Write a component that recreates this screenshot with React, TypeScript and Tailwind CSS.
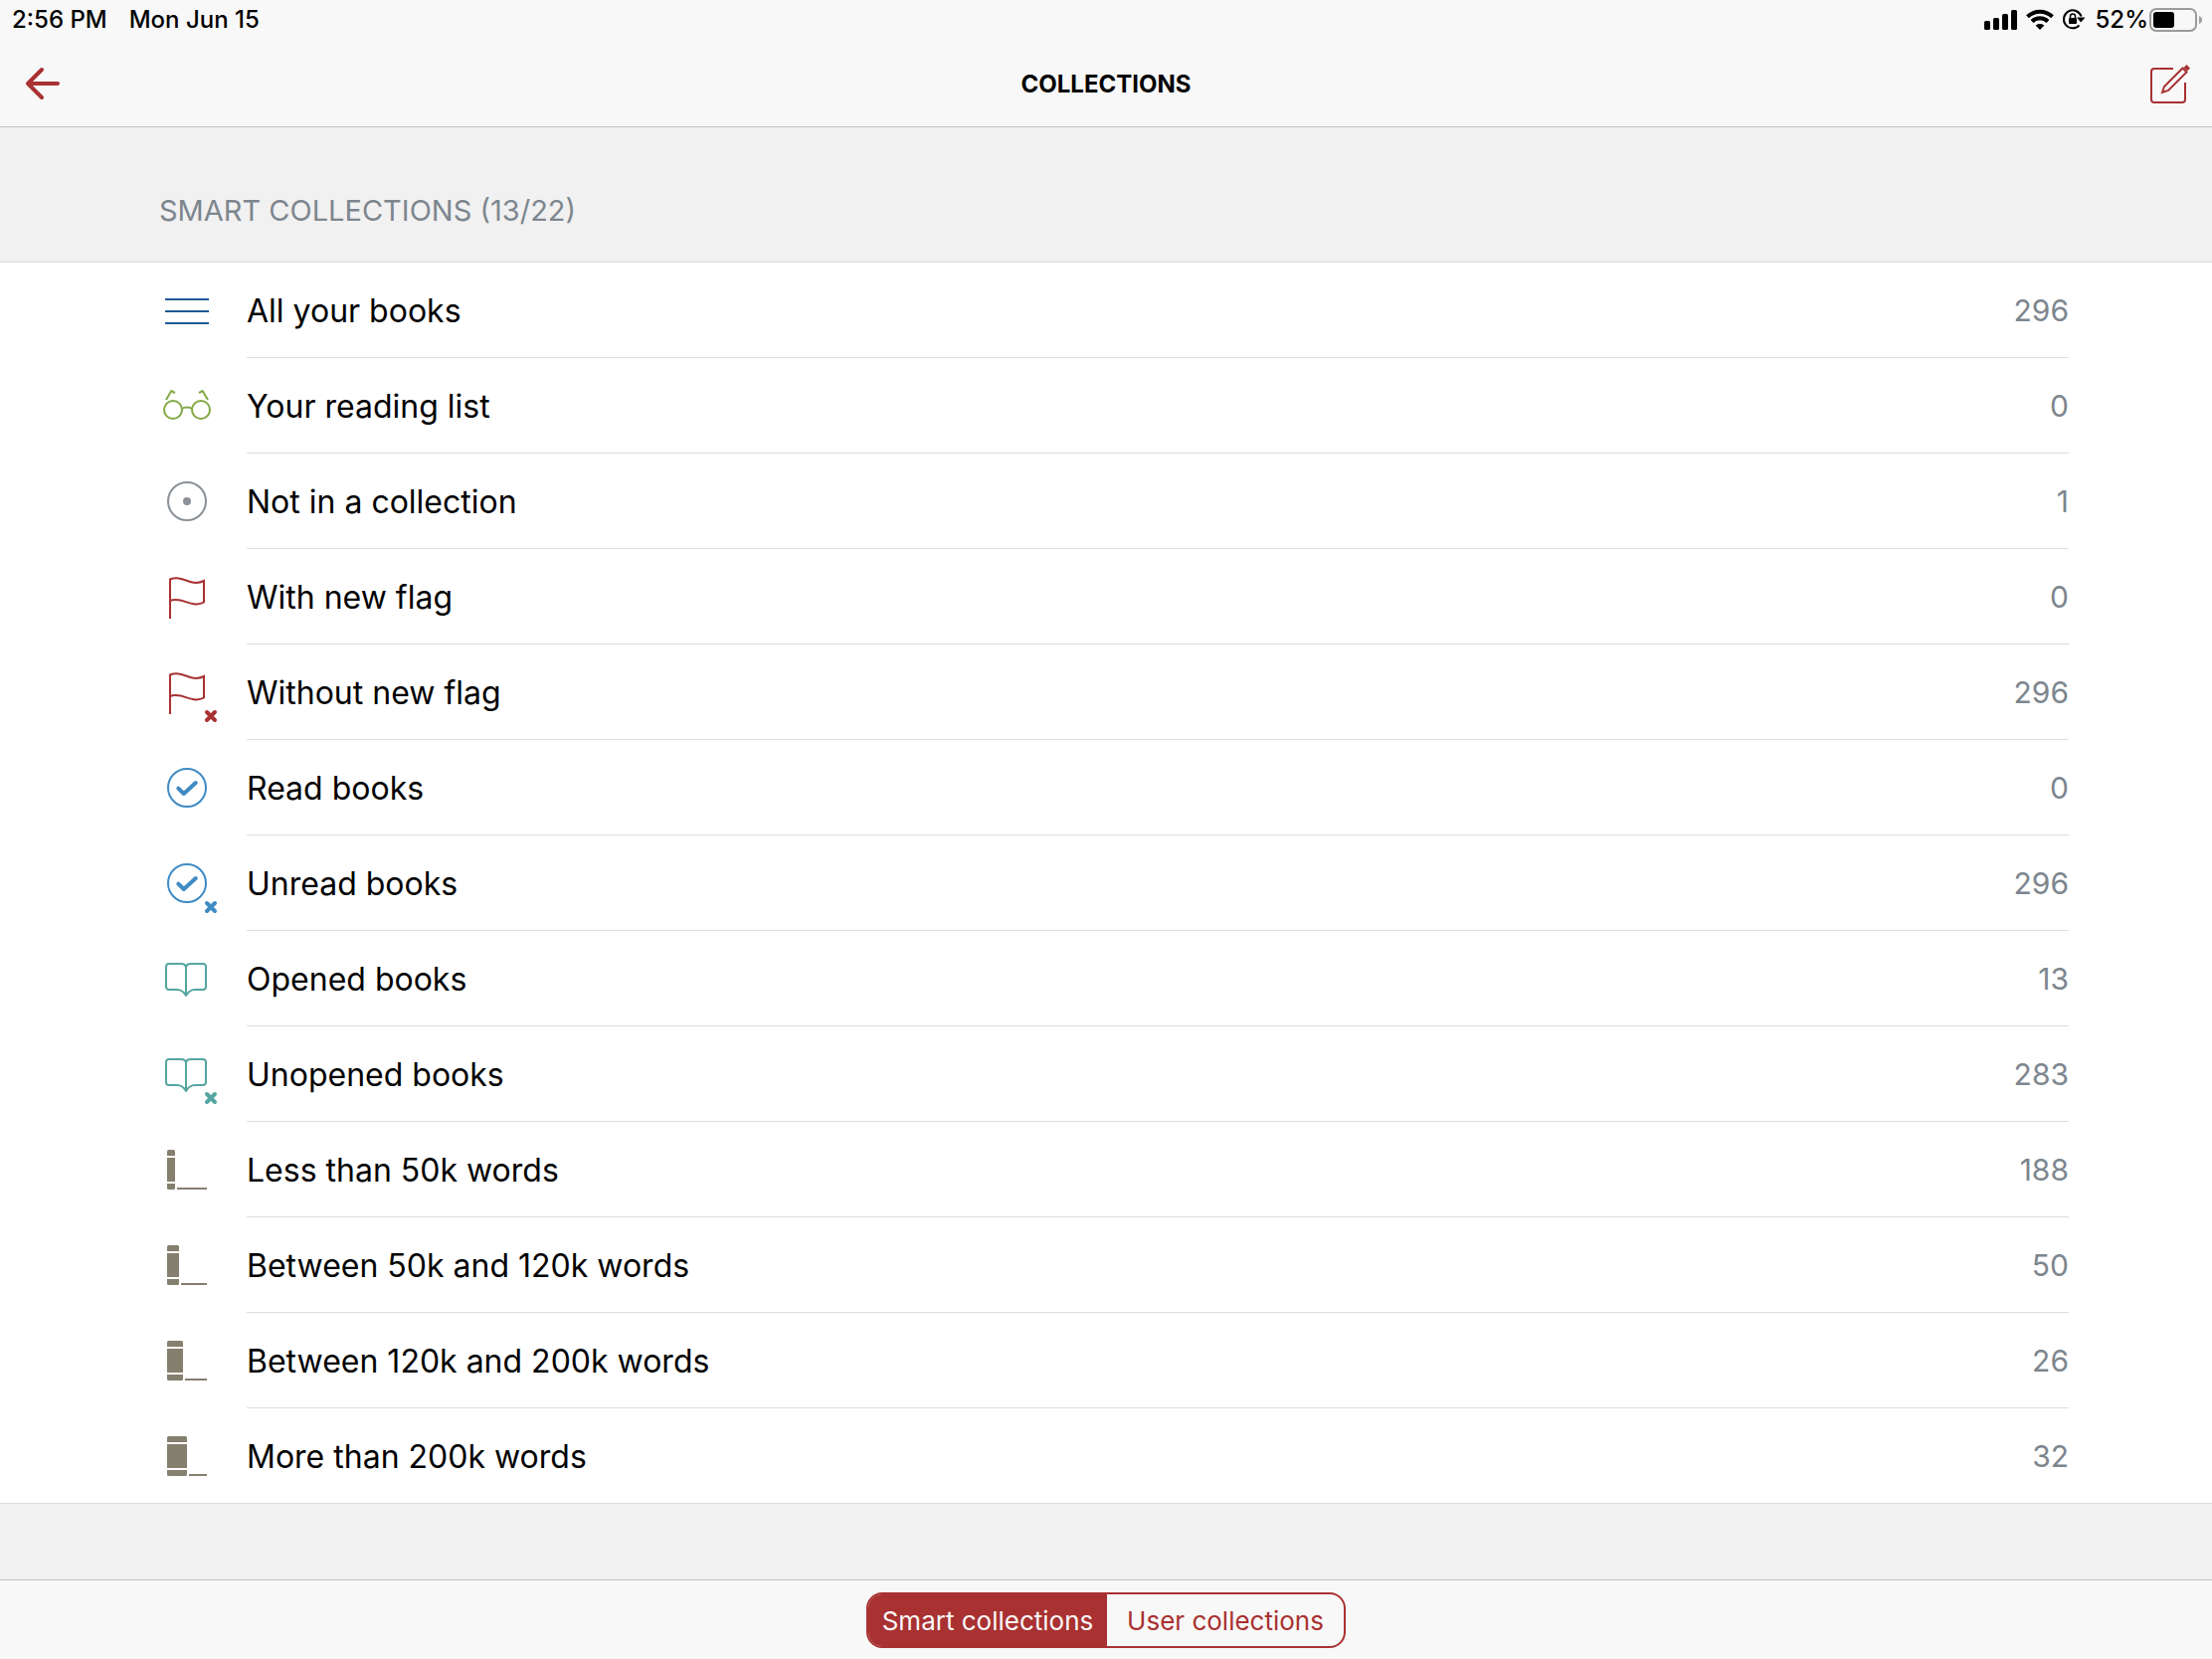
import { useState } from "react";
import type { ReactNode } from "react";

const RED = "#a93131";
const BLUE = "#3f8bc4";
const TEAL = "#54a6a1";
const TAUPE = "#857f6f";

function Cross({ color }: { color: string }) {
  return <path d="M52 52L60 60M60 52L52 60" stroke={color} strokeWidth="4" strokeLinecap="round" />;
}

function Flag() {
  return (
    <path
      d="M15 54V14.5C24 10.5 32 17 39 17.8C43 18.2 46 17.6 49 16V37.5C46 39.3 43 39.8 39 39.3C32 38.5 24 32.5 15 36"
      stroke={RED}
      strokeWidth="2"
    />
  );
}

function Check() {
  return (
    <g stroke={BLUE}>
      <circle cx="32" cy="32" r="19" strokeWidth="2" />
      <path d="M23.3 32.6L28.8 38L40.8 27" strokeWidth="4" strokeLinecap="round" strokeLinejoin="round" />
    </g>
  );
}

function Book() {
  return (
    <path
      d="M31 49V21C31 18.5 29 17 26 17H14Q11 17 11 20V40Q11 43 14 43H22C26 43 29 45.5 31 49C33 45.5 36 43 40 43H48Q51 43 51 40V20Q51 17 48 17H36C33 17 31 18.5 31 21"
      stroke={TEAL}
      strokeWidth="2"
      strokeLinejoin="round"
    />
  );
}

function Spine({ width }: { width: number }) {
  return (
    <g fill={TAUPE}>
      <path d={`M12 18V13.5Q12 12 13.5 12H${10.5 + width}Q${12 + width} 12 ${12 + width} 13.5V18Z`} />
      <rect x="12" y="20" width={width} height="24" />
      <path d={`M12 46V50.5Q12 52 13.5 52H${10.5 + width}Q${12 + width} 52 ${12 + width} 50.5V46Z`} />
      <rect x={14 + width} y="50" width={38 - width} height="2" />
    </g>
  );
}

const lines = <path d="M10 21H54M10 33H54M10 45H54" stroke="#1f5a96" strokeWidth="2" />;

const glasses = (
  <g stroke="#82a843" strokeWidth="2">
    <circle cx="18" cy="36" r="9" />
    <circle cx="46" cy="36" r="9" />
    <path d="M27 35C29 33 35 33 37 35" />
    <path d="M11 26L16.3 17L20 19M53 26L47.7 17L44 19" />
  </g>
);

const target = (
  <g>
    <circle cx="32" cy="32" r="19" stroke="#8b9198" strokeWidth="2" />
    <circle cx="32" cy="32" r="4" fill="#8b9198" />
  </g>
);

const collections: { name: string; count: number; icon: ReactNode }[] = [
  { name: "All your books", count: 296, icon: lines },
  { name: "Your reading list", count: 0, icon: glasses },
  { name: "Not in a collection", count: 1, icon: target },
  { name: "With new flag", count: 0, icon: <Flag /> },
  { name: "Without new flag", count: 296, icon: <><Flag /><Cross color={RED} /></> },
  { name: "Read books", count: 0, icon: <Check /> },
  { name: "Unread books", count: 296, icon: <><Check /><Cross color={BLUE} /></> },
  { name: "Opened books", count: 13, icon: <Book /> },
  { name: "Unopened books", count: 283, icon: <><Book /><Cross color={TEAL} /></> },
  { name: "Less than 50k words", count: 188, icon: <Spine width={8} /> },
  { name: "Between 50k and 120k words", count: 50, icon: <Spine width={12} /> },
  { name: "Between 120k and 200k words", count: 26, icon: <Spine width={16} /> },
  { name: "More than 200k words", count: 32, icon: <Spine width={20} /> },
];

function StatusBar() {
  return (
    <div className="flex h-10 items-center justify-between pr-[9px] pl-3 text-2xl leading-10 font-medium">
      <div className="flex gap-[22px]">
        <span>2:56 PM</span>
        <span>Mon Jun 15</span>
      </div>
      <div className="flex items-center">
        <svg className="mr-2 h-10 w-[34px]" viewBox="0 0 34 40" aria-label="Cellular signal">
          <rect x="0" y="21" width="6" height="9" rx="1.5" />
          <rect x="9" y="18" width="6" height="12" rx="1.5" />
          <rect x="18" y="14" width="6" height="16" rx="1.5" />
          <rect x="27" y="10" width="6" height="20" rx="1.5" />
        </svg>
        <svg className="mr-2 h-10 w-7" viewBox="0 0 28 40" fill="none" aria-label="Wi-Fi">
          <path d="M1.5 16.8C8.5 10 19.5 10 26.5 16.8" stroke="#000" strokeWidth="4" />
          <path d="M6 21.5C10.5 17.2 17.5 17.2 22 21.5" stroke="#000" strokeWidth="4" />
          <path d="M14 30L9.6 25.6C12 23.4 16 23.4 18.4 25.6Z" fill="#000" />
        </svg>
        <svg className="mr-2.5 h-10 w-6" viewBox="0 0 24 40" fill="none" aria-label="Rotation lock">
          <path d="M17.5 25.5A9 9 0 1 1 19.5 16.5" stroke="#000" strokeWidth="2" />
          <path d="M15 17.500H23.500L19.200 22.500Z" fill="#000" />
          <rect x="7" y="18" width="8" height="6" rx="1" fill="#000" />
          <path d="M8.500 18V16.500A2.500 2.500 0 0 1 13.500 16.500V18" stroke="#000" strokeWidth="1.500" />
        </svg>
        <span>52%</span>
        <svg className="ml-px h-10 w-[54px]" viewBox="0 0 54 40" fill="none" aria-label="Battery">
          <rect x="1" y="9" width="46" height="22" rx="6" stroke="#9b9b9b" strokeWidth="2" />
          <rect x="4" y="12" width="21" height="16" rx="3" fill="#000" />
          <path d="M50 16C54 17.500 54 22.500 50 24Z" fill="#9b9b9b" />
        </svg>
      </div>
    </div>
  );
}

export default function App() {
  const [tab, setTab] = useState<"smart" | "user">("smart");
  return (
    <div className="flex min-h-screen flex-col bg-[#f1f1f1] font-['Inter',sans-serif] text-black">
      <header className="border-b border-[#c3c3c4] bg-[#f8f8f8]">
        <StatusBar />
        <nav className="grid h-[87px] grid-cols-[1fr_auto_1fr] items-center px-5">
          <button type="button" aria-label="Back" className="justify-self-start">
            <svg className="size-11" viewBox="0 0 44 44" fill="none" stroke={RED} strokeWidth="4" strokeLinecap="round" strokeLinejoin="round">
              <path d="M38 22H8M22 8L8 22L22 36" />
            </svg>
          </button>
          <h1 className="pt-0.5 text-2xl font-bold">COLLECTIONS</h1>
          <button type="button" aria-label="Edit collections" className="justify-self-end">
            <svg className="size-11" viewBox="0 0 44 44" fill="none" stroke={RED} strokeWidth="2">
              <path d="M25 7H6Q3 7 3 10V38Q3 41 6 41H34Q37 41 37 38V21" />
              <path d="M14 31L16 25L34.5 6.5L38.5 10.5L20 29Z" />
              <path d="M37 4.5L40.500 8" strokeWidth="4" />
            </svg>
          </button>
        </nav>
      </header>

      <main className="flex-1">
        <h2 className="border-b border-[#dcdddd] px-40 pt-16 pb-[31px] text-[29px] leading-10 text-[#7d868e]">
          SMART COLLECTIONS (13/22)
        </h2>
        <ul className="border-b border-[#dcdddd] bg-white pr-36 pl-39">
          {collections.map((item, index) => (
            <li key={item.name}>
              <a href="#" className={index < collections.length - 1 ? "flex h-24 items-center" : "flex h-[95px] items-center"}>
                <svg className="size-16 shrink-0" viewBox="0 0 64 64" fill="none" aria-hidden="true">
                  {item.icon}
                </svg>
                <span
                  className={
                    index < collections.length - 1
                      ? "ml-7 flex h-full flex-1 items-center justify-between border-b border-[#dcdddd]"
                      : "ml-7 flex h-full flex-1 items-center justify-between"
                  }
                >
                  <span className="pt-0.5 text-[32px] leading-10">{item.name}</span>
                  <span className="text-3xl">
                    <span className="text-[#7d868e]">{item.count}</span>
                  </span>
                </span>
              </a>
            </li>
          ))}
        </ul>
      </main>

      <footer className="flex justify-center border-t border-[#c3c3c4] bg-[#f8f8f8] pt-3 pb-[11px]">
        <div className="flex h-14 w-[482px] overflow-hidden rounded-2xl border-2 border-[#a93131] text-[26px]">
          <button
            type="button"
            aria-pressed={tab === "smart"}
            onClick={() => setTab("smart")}
            className={tab === "smart" ? "w-60 bg-[#a93131] text-[#f8f8f8]" : "w-60 text-[#a93131]"}
          >
            Smart collections
          </button>
          <button
            type="button"
            aria-pressed={tab === "user"}
            onClick={() => setTab("user")}
            className={tab === "user" ? "flex-1 bg-[#a93131] text-[#f8f8f8]" : "flex-1 text-[#a93131]"}
          >
            User collections
          </button>
        </div>
      </footer>
    </div>
  );
}
